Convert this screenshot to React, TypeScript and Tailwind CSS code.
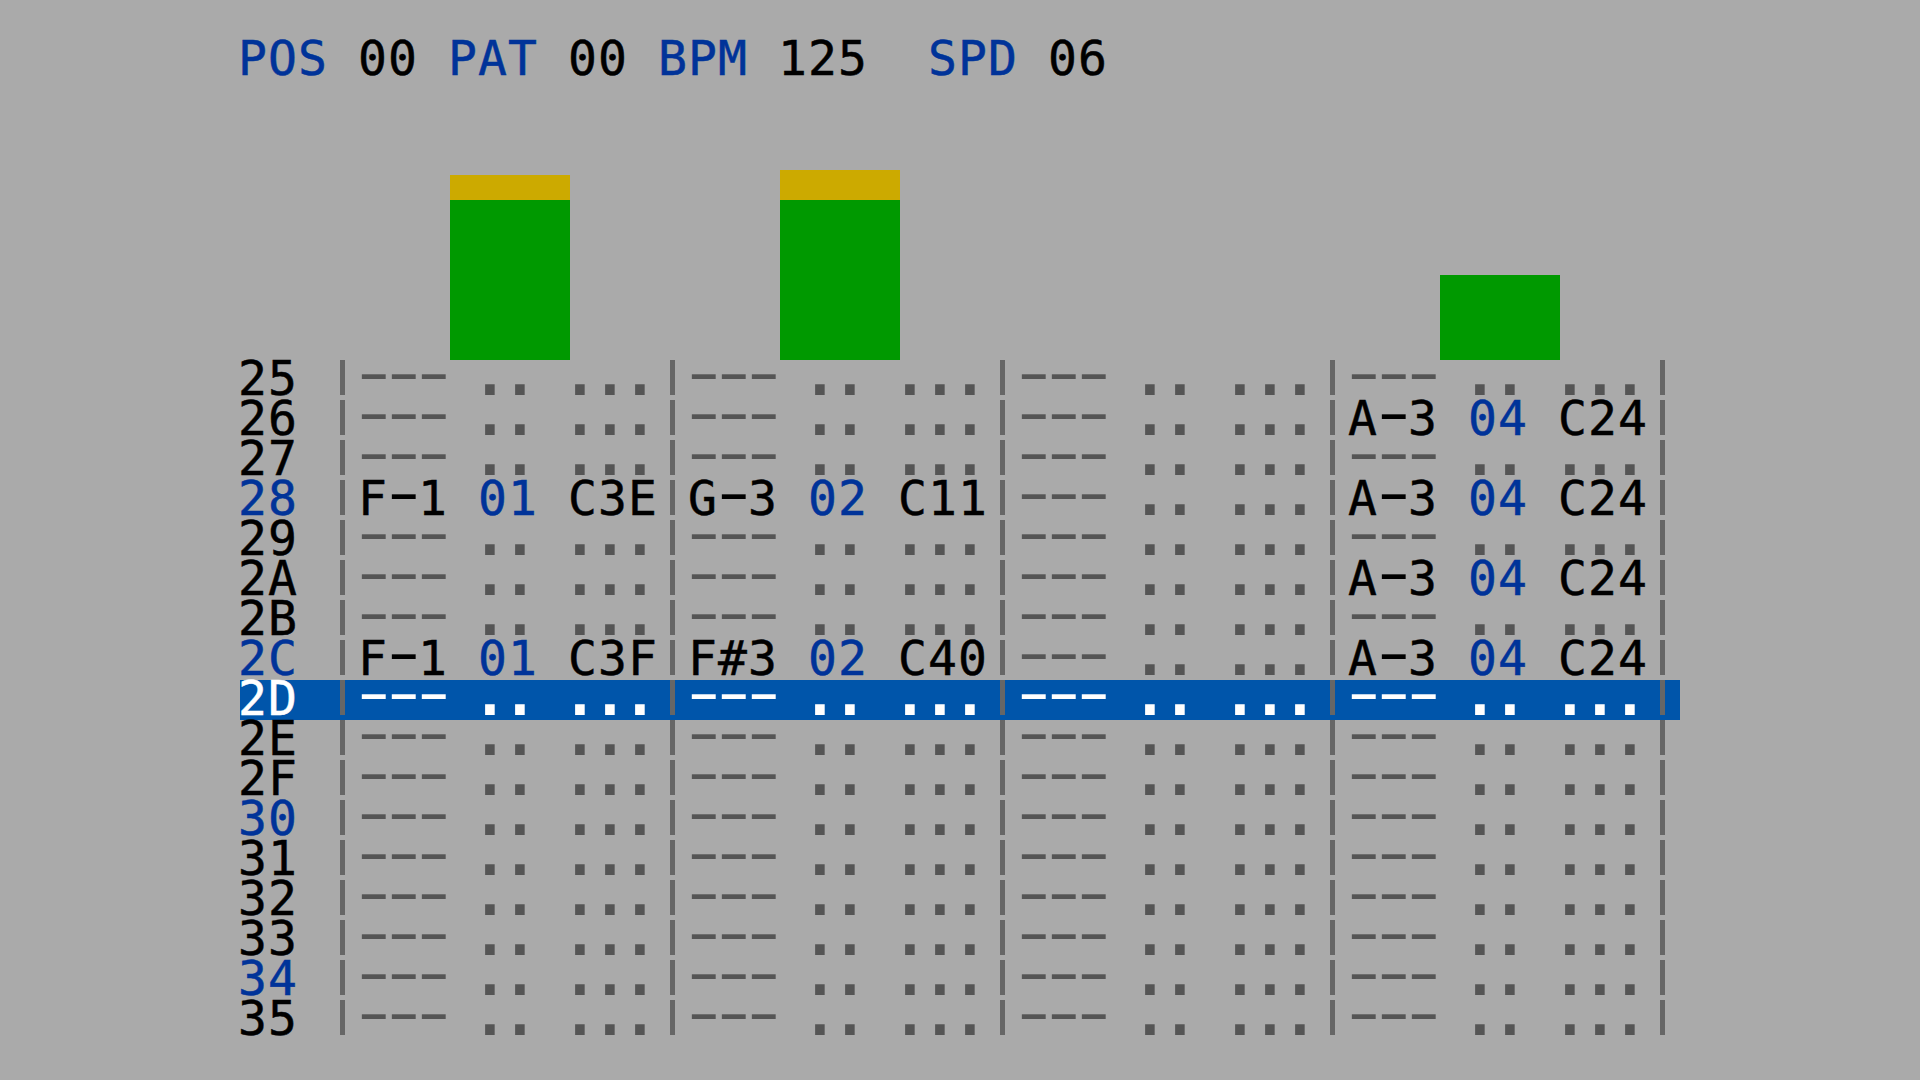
import React from "react";

type Tone = "black" | "blue" | "dim" | "white";

const toneClass: Record<Tone, string> = {
  black: "text-black",
  blue: "text-[#003399]",
  dim: "text-[#555555]",
  white: "text-white",
};

const ROWS = Array.from({ length: 17 }, (_, i) => 0x25 + i);
const CURSOR = 0x2d;

// per row: the four tracks, null = empty
const NOTES: Record<number, (string | null)[]> = {
  0x26: [null, null, null, "A-3 04 C24"],
  0x28: ["F-1 01 C3E", "G-3 02 C11", null, "A-3 04 C24"],
  0x2a: [null, null, null, "A-3 04 C24"],
  0x2c: ["F-1 01 C3F", "F#3 02 C40", null, "A-3 04 C24"],
};

const METERS = [
  { green: 160, yellow: 25 },
  { green: 160, yellow: 30 },
  { green: 0, yellow: 0 },
  { green: 85, yellow: 0 },
];

const EMPTY = "--- .. ...";

// one 30x40 character cell, baseline at 35px
function Glyph({ ch, tone }: { ch: string; tone: Tone }) {
  if (ch === " ") return <span className="w-[30px] h-[40px] shrink-0" />;
  let inner: React.ReactNode;
  if (ch === "-") {
    inner = (
      <span className="origin-left scale-x-[1.6] font-['Roboto',sans-serif] text-[62.5px] leading-[30.7px]">-</span>
    );
  } else if (ch === ".") {
    inner = (
      <span className="-ml-[4px] font-['Liberation_Sans',sans-serif] text-[100px] leading-[0px]">.</span>
    );
  } else {
    inner = (
      <span className="-ml-[2px] text-[48px] tracking-[1.1px] leading-[36.9px] [-webkit-text-stroke:0.5px_currentColor]">
        {ch}
      </span>
    );
  }
  return <span className={`w-[30px] h-[40px] shrink-0 flex items-start ${toneClass[tone]}`}>{inner}</span>;
}

function Text({ s, tone }: { s: string; tone: Tone }) {
  return (
    <>
      {s.split("").map((c, i) => (
        <Glyph key={i} ch={c} tone={tone} />
      ))}
    </>
  );
}

function Divider() {
  return (
    <span className="w-[30px] h-[40px] shrink-0 flex">
      <span className="ml-[10px] w-[5px] h-[35px] bg-[#666666]" />
    </span>
  );
}

function Track({ data, cursor }: { data: string | null; cursor: boolean }) {
  const s = data ?? EMPTY;
  const main: Tone = cursor ? "white" : data ? "black" : "dim";
  const insTone: Tone = cursor ? "white" : data ? "blue" : "dim";
  return (
    <>
      <Divider />
      <Text s={s.slice(0, 4)} tone={main} />
      <Text s={s.slice(4, 6)} tone={insTone} />
      <Text s={s.slice(6)} tone={main} />
    </>
  );
}

function PatternRow({ n }: { n: number }) {
  const cursor = n === CURSOR;
  const label = n.toString(16).toUpperCase().padStart(2, "0");
  const labelTone: Tone = cursor ? "white" : n % 4 === 0 ? "blue" : "black";
  const tracks = NOTES[n] ?? [null, null, null, null];
  return (
    <div className={`flex h-[40px] w-[1440px] items-start ${cursor ? "bg-[#0055aa]" : ""}`}>
      <Text s={label + " "} tone={labelTone} />
      {tracks.map((t, i) => (
        <Track key={i} data={t} cursor={cursor} />
      ))}
      <Divider />
    </div>
  );
}

export default function App() {
  return (
    <div className="min-h-screen w-full bg-[#aaaaaa] pt-[40px] pl-[240px] font-['DejaVu_Sans_Mono','Liberation_Mono',monospace]">
      <div className="flex h-[40px] items-start">
        <Text s="POS" tone="blue" />
        <Text s=" 00 " tone="black" />
        <Text s="PAT" tone="blue" />
        <Text s=" 00 " tone="black" />
        <Text s="BPM" tone="blue" />
        <Text s=" 125  " tone="black" />
        <Text s="SPD" tone="blue" />
        <Text s=" 06" tone="black" />
      </div>

      <div className="flex h-[280px] items-end">
        <div className="w-[90px] shrink-0" />
        {METERS.map((m, i) => (
          <div key={i} className="w-[330px] shrink-0 flex items-end pl-[120px]">
            {m.green > 0 && (
              <div className="w-[120px] flex flex-col">
                {m.yellow > 0 && <div className="bg-[#ccaa00]" style={{ height: m.yellow }} />}
                <div className="bg-[#009900]" style={{ height: m.green }} />
              </div>
            )}
          </div>
        ))}
      </div>

      <div className="flex flex-col">
        {ROWS.map((n) => (
          <PatternRow key={n} n={n} />
        ))}
      </div>
    </div>
  );
}
